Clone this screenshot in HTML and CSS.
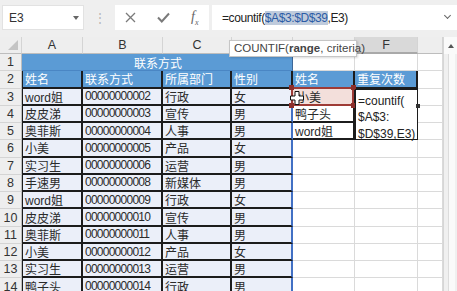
FILE: index.html
```html
<!DOCTYPE html>
<html lang="zh-CN">
<head>
  <meta charset="UTF-8" />
  <title>联系方式 - COUNTIF</title>
  <link rel="stylesheet" href="styles.css">
</head>
<body>
  <div class="formula-bar">
    <div class="name-box">E3<span class="drop"></span></div>
    <div class="grip">⋮</div>
    <div class="fx-buttons">
      <svg width="11" height="11" viewBox="0 0 11 11"><path d="M1 1 L10 10 M10 1 L1 10" stroke="#7a7a7a" stroke-width="1.3" fill="none"/></svg>
      <svg width="13" height="11" viewBox="0 0 13 11"><path d="M1 5.5 L4.8 9.5 L12 1.5" stroke="#7a7a7a" stroke-width="2" fill="none"/></svg>
      <span class="fx">f<sub>x</sub></span>
    </div>
    <div class="formula-input">
      <span>=countif(</span><span class="ref-range">$A$3:$D$39</span><span>,E3)</span>
      <span class="chevron"></span>
    </div>
  </div>

  <div class="workbook">
    <div class="sheet">
      <div class="col-hdr corner"><span class="tri"></span></div>
      <div class="col-hdr">A</div>
      <div class="col-hdr">B</div>
      <div class="col-hdr">C</div>
      <div class="col-hdr">D</div>
      <div class="col-hdr">E</div>
      <div class="col-hdr active">F</div>
      <div class="col-hdr"></div>

      <div class="row-hdr">1</div>
      <div class="title">联系方式</div>
      <div></div><div></div><div></div>

      <div class="row-hdr">2</div>
      <div class="th first">姓名</div>
      <div class="th">联系方式</div>
      <div class="th">所属部门</div>
      <div class="th">性别</div>
      <div class="th">姓名</div>
      <div class="th">重复次数</div>
      <div></div>

      <div class="row-hdr">3</div>
      <div class="t first">word姐</div>
      <div class="t num">00000000002</div>
      <div class="t">行政</div>
      <div class="t last">女</div>
      <div class="t crit">
        小美
        <div class="crit-frame">
          <i class="h tl"></i><i class="h tr"></i><i class="h bl"></i><i class="h br"></i>
        </div>
        <svg class="cursor" width="14" height="14" viewBox="0 0 14 14"><path d="M5 0.5 H9 V5 H13.5 V9 H9 V13.5 H5 V9 H0.5 V5 H5 Z" fill="#fff" stroke="#111" stroke-width="1"/></svg>
      </div>
      <div class="edit-box">=countif(<br>$A$3:<br>$D$39,E3)<i class="fill-handle"></i></div>
      <div></div>

      <div class="row-hdr">4</div>
      <div class="t first">皮皮涕</div>
      <div class="t num">00000000003</div>
      <div class="t">宣传</div>
      <div class="t last">男</div>
      <div class="t plain">鸭子头</div>
      <div></div>

      <div class="row-hdr">5</div>
      <div class="t first">奥菲斯</div>
      <div class="t num">00000000004</div>
      <div class="t">人事</div>
      <div class="t last">男</div>
      <div class="t plain">word姐</div>
      <div></div>

      <div class="row-hdr">6</div>
      <div class="t first">小美</div>
      <div class="t num">00000000005</div>
      <div class="t">产品</div>
      <div class="t last">女</div>
      <div></div><div></div><div></div>

      <div class="row-hdr">7</div>
      <div class="t first">实习生</div>
      <div class="t num">00000000006</div>
      <div class="t">运营</div>
      <div class="t last">男</div>
      <div></div><div></div><div></div>

      <div class="row-hdr">8</div>
      <div class="t first">手速男</div>
      <div class="t num">00000000008</div>
      <div class="t">新媒体</div>
      <div class="t last">男</div>
      <div></div><div></div><div></div>

      <div class="row-hdr">9</div>
      <div class="t first">word姐</div>
      <div class="t num">00000000009</div>
      <div class="t">行政</div>
      <div class="t last">女</div>
      <div></div><div></div><div></div>

      <div class="row-hdr">10</div>
      <div class="t first">皮皮涕</div>
      <div class="t num">00000000010</div>
      <div class="t">宣传</div>
      <div class="t last">男</div>
      <div></div><div></div><div></div>

      <div class="row-hdr">11</div>
      <div class="t first">奥菲斯</div>
      <div class="t num">00000000011</div>
      <div class="t">人事</div>
      <div class="t last">男</div>
      <div></div><div></div><div></div>

      <div class="row-hdr">12</div>
      <div class="t first">小美</div>
      <div class="t num">00000000012</div>
      <div class="t">产品</div>
      <div class="t last">女</div>
      <div></div><div></div><div></div>

      <div class="row-hdr">13</div>
      <div class="t first">实习生</div>
      <div class="t num">00000000013</div>
      <div class="t">运营</div>
      <div class="t last">男</div>
      <div></div><div></div><div></div>

      <div class="row-hdr">14</div>
      <div class="t first">鸭子头</div>
      <div class="t num">00000000014</div>
      <div class="t">行政</div>
      <div class="t last">男</div>
      <div></div><div></div><div></div>
    </div>

    <div class="scrollbar">
      <div class="scroll-up"><span class="up"></span></div>
      <div class="scroll-track"></div>
    </div>
  </div>

  <div class="tooltip">COUNTIF(<b>range</b>, criteria)</div>
</body>
</html>
```

FILE: styles.css
```css
:root {
  --azul: #5b9bd5;
  --azul-rango: #4170c4;
  --lila: #ebeff9;
  --negro: #1c1c1c;
  --rejilla: #dadada;
  --gris-barra: #efefef;
  --gris-cabecera: #eeeeee;
  --rojo: #9e3b36;
}

* {
  box-sizing: border-box;
}

body {
  margin: 0;
  width: 457px;
  height: 291px;
  overflow: hidden;
  position: relative;
  background: #ffffff;
  font-family: "Liberation Sans", "Noto Sans CJK SC", sans-serif;
  color: #222;
}

/* barra de formulas */
.formula-bar {
  height: 37px;
  background: var(--gris-barra);
  display: flex;
  align-items: flex-start;
  padding: 5px 0 0 2px;
}

.name-box {
  width: 82px;
  height: 25px;
  background: #fff;
  border: 1px solid #e2e2e2;
  display: flex;
  align-items: center;
  justify-content: space-between;
  padding: 0 4px 0 6px;
  font-size: 12px;
  color: #333;
}

.drop {
  width: 0;
  height: 0;
  border-left: 3.5px solid transparent;
  border-right: 3.5px solid transparent;
  border-top: 4px solid #666;
}

.grip {
  width: 31px;
  height: 25px;
  display: flex;
  align-items: center;
  justify-content: center;
  color: #b5b5b5;
  font-size: 12px;
}

.fx-buttons {
  width: 94px;
  height: 25px;
  background: #fff;
  display: flex;
  align-items: center;
  justify-content: space-around;
}

.fx {
  font-family: "Liberation Serif", serif;
  font-style: italic;
  font-size: 14px;
  color: #666;
}

.fx sub {
  font-size: 8px;
}

.formula-input {
  flex: 1;
  height: 25px;
  margin-left: 3px;
  background: #fff;
  display: flex;
  align-items: center;
  padding-left: 10px;
  font-size: 12px;
  letter-spacing: -0.4px;
  color: #222;
  position: relative;
}

.ref-range {
  background: #bfcbdc;
  color: #2c5ca6;
}

.chevron {
  position: absolute;
  right: 7px;
  top: 8px;
  width: 5px;
  height: 5px;
  border-right: 1.3px solid #666;
  border-bottom: 1.3px solid #666;
  transform: rotate(45deg);
}

/* hoja */
.workbook {
  display: flex;
  height: 254px;
  overflow: hidden;
}

.sheet {
  display: grid;
  grid-template-columns: 22px 61px 80px 69px 61px 62px 63px 25px;
  grid-template-rows: 17px repeat(14, 17.27px);
  font-size: 12px;
}

.sheet > div {
  border-right: 1px solid var(--rejilla);
  border-bottom: 1px solid var(--rejilla);
  display: flex;
  align-items: center;
  padding-left: 2px;
  white-space: nowrap;
  overflow: hidden;
}

.sheet > .col-hdr {
  background: var(--gris-cabecera);
  border-right-color: #d4d4d4;
  border-bottom-color: #bdbdbd;
  justify-content: center;
  padding: 0;
  font-size: 12.5px;
  color: #333;
}

.sheet > .col-hdr.active {
  background: #d9d9d9;
  border-bottom: 2px solid #a9a9a9;
}

.sheet > .corner {
  position: relative;
}

.tri {
  position: absolute;
  right: 3px;
  bottom: 3px;
  width: 0;
  height: 0;
  border-left: 10px solid transparent;
  border-bottom: 10px solid #c4c4c4;
}

.sheet > .row-hdr {
  background: var(--gris-cabecera);
  border-right-color: #bdbdbd;
  border-bottom-color: #d4d4d4;
  justify-content: center;
  padding: 0;
  font-size: 12.5px;
  color: #333;
}

.sheet > .title {
  grid-column: span 4;
  background: var(--azul);
  color: #fff;
  justify-content: center;
  border-right-color: #3d6797;
  border-bottom-color: #4a86c4;
}

.sheet > .th {
  background: var(--azul);
  color: #fff;
  border-right: 2px solid var(--negro);
  border-bottom: 2px solid var(--negro);
}

.sheet > .t {
  background: var(--lila);
  border-right: 2px solid var(--negro);
  border-bottom: 2px solid var(--negro);
  color: #2a2a2a;
}

.sheet > .first {
  border-left: 1px solid var(--negro);
}

.sheet > .t.last {
  border-right: 2px solid var(--azul-rango);
}

.sheet > .num {
  letter-spacing: -0.75px;
}

.sheet > .t.plain {
  background: #fff;
}

.sheet > .t.crit {
  background: #f3dfdb;
  overflow: visible;
  position: relative;
  padding-left: 4px;
}

.crit-frame {
  position: absolute;
  inset: -2px -1px -2px -2px;
  border: 2px solid var(--rojo);
}

.h {
  position: absolute;
  width: 5px;
  height: 5px;
  background: #8c2f2b;
}

.h.tl { left: -4px; top: -4px; }
.h.tr { right: -4px; top: -4px; }
.h.bl { left: -4px; bottom: -4px; }
.h.br { right: -4px; bottom: -4px; }

.cursor {
  position: absolute;
  left: -3px;
  top: 2px;
}

.sheet > .edit-box {
  grid-row: span 3;
  background: #fff;
  border: 1px solid var(--negro);
  align-items: flex-start;
  padding: 3px 0 0 2px;
  line-height: 16.5px;
  overflow: visible;
  position: relative;
  white-space: normal;
}

.fill-handle {
  position: absolute;
  right: -3px;
  top: 14px;
  width: 4px;
  height: 4px;
  background: #333;
}

/* barra de desplazamiento */
.scrollbar {
  width: 14px;
  background: #f0f0f0;
  border-left: 1px solid #d6d6d6;
  display: flex;
  flex-direction: column;
}

.scroll-up {
  height: 17px;
  background: #fafafa;
  display: flex;
  align-items: center;
  justify-content: center;
}

.up {
  width: 0;
  height: 0;
  border-left: 3.5px solid transparent;
  border-right: 3.5px solid transparent;
  border-bottom: 4px solid #555;
}

.scroll-track {
  flex: 1;
  margin: 0 2px 0 4px;
  background: #fafafa;
  border-left: 1px solid #dcdcdc;
}

/* ayuda de la funcion */
.tooltip {
  position: absolute;
  left: 229px;
  top: 40px;
  width: 128px;
  height: 17px;
  background: #fff;
  border: 1px solid #c6c6c6;
  box-shadow: 1px 1px 2px rgba(0, 0, 0, 0.15);
  font-size: 11.5px;
  color: #444;
  padding: 1px 0 0 4px;
  white-space: nowrap;
}
```
